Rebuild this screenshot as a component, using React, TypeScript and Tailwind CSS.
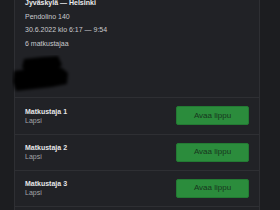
const passengers = [1, 2, 3];

function Redacted() {
  // blurred black scribble that hides the ticket holder's name
  return (
    <svg width="60" height="38" viewBox="0 0 60 38" className="-ml-[3px] block">
      <defs>
        <filter id="blur" x="-20%" y="-20%" width="140%" height="140%">
          <feGaussianBlur stdDeviation="1.6" />
        </filter>
      </defs>
      <g filter="url(#blur)" fill="#000">
        <path d="M12 4 L30 2 L46 1 L50 10 L44 16 L14 18 L10 12 Z" />
        <path d="M2 16 L32 12 L50 13 L56 18 L55 29 L40 32 L22 34 L4 36 L1 27 Z" />
      </g>
    </svg>
  );
}

function PassengerRow({ n }: { n: number }) {
  return (
    <div className="flex h-[36.5px] shrink-0 items-center justify-between border-t border-[#2e2f33] px-[10px] last:border-b">
      <div className="flex flex-col leading-[9px]">
        <span className="text-[7px] font-bold text-[#e6e6e8]">Matkustaja {n}</span>
        <span className="text-[7px] text-[#a4a5a8]">Lapsi</span>
      </div>
      <button
        type="button"
        className="h-[19px] w-[73px] rounded-[2px] border border-[#237a33] bg-[#2b8c3c] text-[8px] text-[#17361d]"
      >
        Avaa lippu
      </button>
    </div>
  );
}

export default function App() {
  return (
    <div
      className="h-[210px] w-[280px] overflow-hidden bg-[#1c1d20]"
      style={{ fontFamily: '"Liberation Sans", Arial, sans-serif' }}
    >
      <div className="ml-[14px] mt-[-4px] flex h-[230px] w-[246px] flex-col border-x border-[#2e2f33] bg-[#212226]">
        <div className="flex h-[54px] shrink-0 flex-col pl-[10px] text-[7px] leading-[13px] text-[#c9cacd]">
          <span className="font-bold text-[#ececee]">Jyväskylä — Helsinki</span>
          <span className="mt-px">Pendolino 140</span>
          <span>30.6.2022 klo 6:17 — 9:54</span>
          <span className="mt-px">6 matkustajaa</span>
        </div>
        <div className="h-[47px] shrink-0 pt-[5px]">
          <Redacted />
        </div>
        {passengers.map((n) => (
          <PassengerRow key={n} n={n} />
        ))}
      </div>
    </div>
  );
}
